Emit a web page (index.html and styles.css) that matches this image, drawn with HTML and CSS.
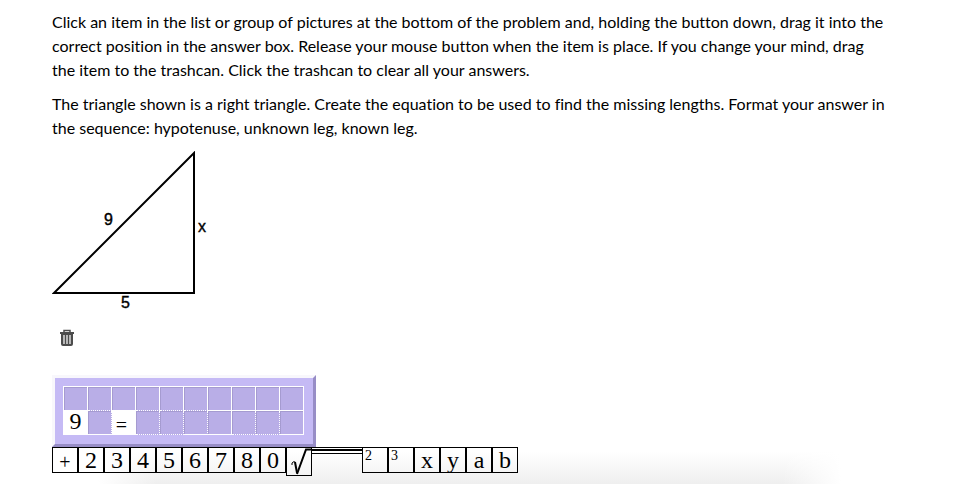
FILE: index.html
```html
<!DOCTYPE html>
<html lang="en">
<head>
    <meta charset="UTF-8">
    <meta name="viewport" content="width=device-width, initial-scale=1.0">
    <title>Right Triangle Problem</title>
    <link rel="stylesheet" href="styles.css">
</head>
<body>
    <main class="problem">
        <p>Click an item in the list or group of pictures at the bottom of the problem and, holding the button down, drag it into the correct position in the answer box. Release your mouse button when the item is place. If you change your mind, drag the item to the trashcan. Click the trashcan to clear all your answers.</p>
        <p>The triangle shown is a right triangle. Create the equation to be used to find the missing lengths. Format your answer in the sequence: hypotenuse, unknown leg, known leg.</p>

        <svg class="triangle" width="160" height="162" viewBox="0 0 160 162" role="img" aria-label="Right triangle">
            <path d="M2 142 L142 2 V142 Z" fill="none" stroke="#000" stroke-width="2"/>
            <text x="52" y="74">9</text>
            <text x="146" y="81">x</text>
            <text x="69" y="157">5</text>
        </svg>

        <button class="trash" type="button" aria-label="Clear all answers">
            <svg width="16" height="18" viewBox="0 0 16 18">
                <path d="M5 3 V1.5 H11 V3" fill="none" stroke="#4c4c4c" stroke-width="1.5"/>
                <path d="M1 3 H15 V5 H1 Z M2 5 H14 V15 Q14 17 12 17 H4 Q2 17 2 15 Z" fill="#4c4c4c"/>
                <path d="M5 6 V15 M8 6 V15 M11 6 V15" stroke="#fff" stroke-width="1.2"/>
            </svg>
        </button>

        <div class="answer-box">
            <div class="cells">
                <span class="cell"></span>
                <span class="cell dotted-bottom"></span>
                <span class="cell"></span>
                <span class="cell dotted-bottom"></span>
                <span class="cell dotted-bottom"></span>
                <span class="cell dotted-bottom"></span>
                <span class="cell"></span>
                <span class="cell"></span>
                <span class="cell"></span>
                <span class="cell"></span>
                <span class="cell filled">9</span>
                <span class="cell dotted-right"></span>
                <span class="cell filled equals">=</span>
                <span class="cell dotted-right dotted-bottom"></span>
                <span class="cell dotted-right dotted-bottom"></span>
                <span class="cell dotted-right"></span>
                <span class="cell"></span>
                <span class="cell dotted-right dotted-bottom"></span>
                <span class="cell dotted-right dotted-bottom"></span>
                <span class="cell"></span>
            </div>
        </div>

        <div class="tiles">
            <button class="tile plus" type="button">+</button>
            <button class="tile" type="button">2</button>
            <button class="tile" type="button">3</button>
            <button class="tile" type="button">4</button>
            <button class="tile" type="button">5</button>
            <button class="tile" type="button">6</button>
            <button class="tile" type="button">7</button>
            <button class="tile" type="button">8</button>
            <button class="tile" type="button">0</button>
            <button class="tile root" type="button" aria-label="Square root">
                <svg width="24" height="27" viewBox="0 0 24 27">
                    <path d="M5 17 V15 L7 13.500 L9 15" fill="none" stroke="#000" stroke-width="1"/>
                    <path d="M8 14 L10 25" fill="none" stroke="#000" stroke-width="2"/>
                    <path d="M10 26 L19 1.5 H24" fill="none" stroke="#000" stroke-width="2"/>
                </svg>
            </button>
            <button class="tile bar" type="button" aria-label="Root bar"></button>
            <button class="tile power" type="button">2</button>
            <button class="tile power" type="button">3</button>
            <button class="tile" type="button">x</button>
            <button class="tile" type="button">y</button>
            <button class="tile" type="button">a</button>
            <button class="tile" type="button">b</button>
        </div>
    </main>
</body>
</html>
```

FILE: styles.css
```css
body {
    font-family: Lato, sans-serif;
    font-size: 16px;
    font-variant-ligatures: none;
    line-height: 24px;
    color: #000;
    margin: 0;
    min-height: 100vh;
    background:
        linear-gradient(to right, #fff 10%, transparent 16%, transparent 80%, #fff 86%),
        linear-gradient(to top, #efefef, #fff 32px);
}

.problem {
    padding: 10px 90px 0 52px;
}

p {
    margin: 0 0 10px;
}

.triangle {
    display: block;
    margin-top: 11px;
    font-family: "Liberation Sans", Arial, sans-serif;
    font-size: 16px;
}

.triangle text {
    stroke: #000;
    stroke-width: 0.4px;
}

.trash {
    display: block;
    margin: 16px 0 28px 7px;
    padding: 0;
    border: none;
    background: none;
    cursor: pointer;
}

.trash svg {
    display: block;
}

.answer-box {
    width: max-content;
    padding: 8px 9px 9px 8px;
    background-color: #c5baf5;
    border: 3px solid;
    border-color: #f8f7fc #978dc6 #978dc6 #f8f7fc;
}

.cells {
    display: grid;
    grid-template-columns: repeat(10, 24px);
    grid-auto-rows: 24px;
    border-top: 1px solid #fff;
    border-left: 1px solid #fff;
}

.cell {
    box-sizing: border-box;
    background-color: #b9aee7;
    border: 0 solid #fff;
    border-width: 0 1px 1px 0;
    box-shadow: inset 1px 1px #a59bd0;
    text-align: center;
}

.dotted-right {
    border-right-style: dotted;
}

.dotted-bottom {
    border-bottom-style: dotted;
}

.filled {
    background-color: #fff;
    box-shadow: none;
    font: 24px/20px "Liberation Serif", "Times New Roman", serif;
}

.equals {
    padding-right: 4px;
    font-size: 20px;
    line-height: 28px;
}

.tiles {
    display: flex;
    align-items: flex-start;
}

.tile {
    box-sizing: border-box;
    width: 26px;
    height: 26px;
    padding: 0;
    border: 1px solid #000;
    background: none;
    color: #000;
    font: 24px/24px "Liberation Serif", "Times New Roman", serif;
    cursor: pointer;
}

.plus {
    padding-top: 4px;
    font-size: 20px;
    line-height: 20px;
}

.root {
    height: 29px;
}

.root svg {
    display: block;
}

.bar {
    width: 50px;
    height: 7px;
    border-width: 1px 0;
    background: linear-gradient(#000, #000) 0 1px / 100% 2px no-repeat;
}

.power {
    padding: 0 0 8px 2px;
    font-size: 14px;
    line-height: 16px;
    text-align: left;
}
```
